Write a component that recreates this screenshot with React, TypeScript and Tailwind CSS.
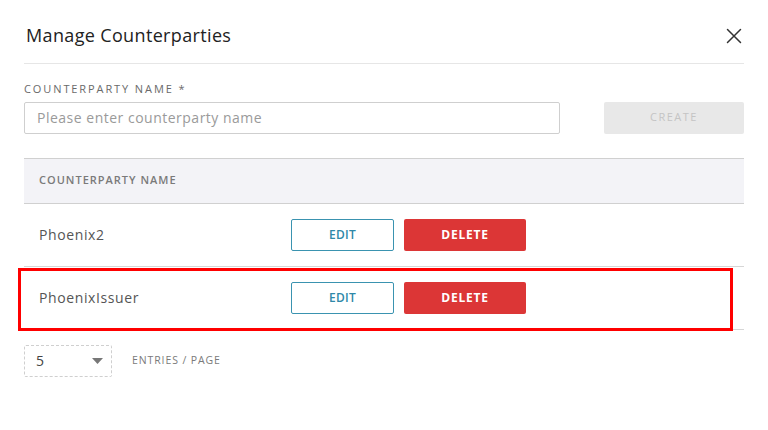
import React from "react";

const font = { fontFamily: '"Open Sans", "Noto Sans", sans-serif' };

function Row({ name }: { name: string }) {
  return (
    <div className="flex h-[63px] items-center border-b border-[#d6d6d6]">
      <div className="w-[267px] pl-[15px] text-[14px] tracking-[0.6px] text-[#555]">{name}</div>
      <button className="h-[32px] w-[103px] rounded-[2px] border border-[#3a93b0] bg-white text-[12px] font-semibold tracking-[0.3px] text-[#2f88a8]">
        EDIT
      </button>
      <button className="ml-[10px] h-[32px] w-[122px] rounded-[2px] bg-[#dc3636] text-[12px] font-bold tracking-[0.8px] text-white">
        DELETE
      </button>
    </div>
  );
}

export default function App() {
  return (
    <div className="relative h-[430px] w-[768px] overflow-hidden bg-white" style={font}>
      <div className="px-[24px]">
        <div className="flex h-[64px] items-center justify-between border-b border-[#e6e6e6] pl-[2px] pt-[8px]">
          <div className="text-[18px] font-medium tracking-[0.35px] text-[#222]">Manage Counterparties</div>
          <svg width="16" height="16" viewBox="0 0 16 16" className="mr-[2px]">
            <path d="M1.5 1.5 L14.5 14.5 M14.5 1.5 L1.5 14.5" stroke="#333" strokeWidth="1.5" strokeLinecap="round" />
          </svg>
        </div>
        <div className="pt-[17px] text-[11px] tracking-[1.9px] text-[#6a6a6a]">COUNTERPARTY NAME *</div>
        <div className="mt-[4px] flex items-center justify-between">
          <div className="flex h-[32px] w-[536px] items-center rounded-[2px] border border-[#cfcfcf] px-[12px] text-[14px] tracking-[0.5px] text-[#9a9a9a]">
            Please enter counterparty name
          </div>
          <button className="h-[32px] w-[140px] rounded-[2px] bg-[#e8e8e8] text-[11px] tracking-[1.5px] text-[#c4c4c4]">
            CREATE
          </button>
        </div>
        <div className="mt-[24px]">
          <div className="flex h-[46px] items-center border-y border-[#d0d0d0] bg-[#f3f3f7] pl-[15px] text-[11px] font-semibold tracking-[1px] text-[#7a7a7a]">
            COUNTERPARTY NAME
          </div>
          <Row name="Phoenix2" />
          <Row name="PhoenixIssuer" />
        </div>
        <div className="mt-[15px] flex items-center">
          <div className="flex h-[32px] w-[88px] items-center justify-between rounded-[2px] border border-dashed border-[#cfcfcf] pl-[11px] pr-[8px] text-[14px] text-[#444]">
            <span>5</span>
            <svg width="11" height="6" viewBox="0 0 11 6">
              <path d="M0 0 L11 0 L5.5 6 Z" fill="#777" />
            </svg>
          </div>
          <div className="ml-[20px] text-[10.5px] tracking-[0.9px] text-[#7a7a7a]">ENTRIES / PAGE</div>
        </div>
      </div>
      <div className="absolute left-[18px] top-[268px] h-[63px] w-[715px] border-[3px] border-[#ff0000]" />
    </div>
  );
}
